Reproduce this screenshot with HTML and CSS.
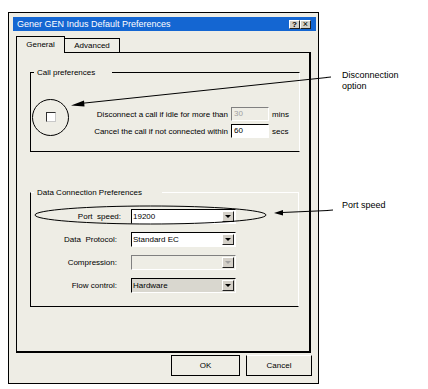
FILE: index.html
```html
<!DOCTYPE html>
<html lang="en">
<head>
  <meta charset="UTF-8">
  <title>Default Preferences</title>
  <link rel="stylesheet" href="styles.css">
</head>
<body>

  <div class="dialog">
    <div class="titlebar">
      <span class="title">Gener GEN Indus Default Preferences</span>
      <div class="title-buttons">
        <span class="tb-btn">?</span>
        <span class="tb-btn tb-close">&times;</span>
      </div>
    </div>

    <div class="tabs">
      <div class="tab active">General</div>
      <div class="tab">Advanced</div>
      <div class="tab-fill"></div>
    </div>

    <div class="panel">
      <div class="group call-group">
        <div class="group-title">Call preferences</div>
        <div class="call-body">
          <span class="checkbox"></span>
          <div class="call-rows">
            <span class="label">Disconnect a call if idle for more than</span>
            <span class="field disabled">30</span>
            <span class="unit">mins</span>
            <span class="label">Cancel the call if not connected within</span>
            <span class="field">60</span>
            <span class="unit">secs</span>
          </div>
        </div>
      </div>

      <div class="group data-group">
        <div class="group-title">Data Connection Preferences</div>
        <div class="data-rows">
          <span class="label port-label">Port&nbsp; speed:</span>
          <div class="combo"><span>19200</span><span class="combo-btn"></span></div>

          <span class="label">Data&nbsp; Protocol:</span>
          <div class="combo"><span>Standard EC</span><span class="combo-btn"></span></div>

          <span class="label">Compression:</span>
          <div class="combo disabled"><span></span><span class="combo-btn"></span></div>

          <span class="label">Flow control:</span>
          <div class="combo grey"><span>Hardware</span><span class="combo-btn"></span></div>
        </div>
      </div>
    </div>

    <div class="buttons">
      <button class="btn btn-ok">OK</button>
      <button class="btn btn-cancel">Cancel</button>
    </div>
  </div>

  <!-- annotation layer -->
  <svg class="notes" width="428" height="389" viewBox="0 0 428 389">
    <circle cx="50.5" cy="117.5" r="18" fill="none" stroke="#000"/>
    <line x1="82" y1="103.3" x2="327" y2="77.5" stroke="#000"/>
    <line x1="326" y1="77.5" x2="331" y2="77" stroke="#000"/>
    <polygon points="71,105.5 84,100.5 84.5,106.5" fill="#000"/>

    <ellipse cx="150.5" cy="215" rx="115.5" ry="9" fill="none" stroke="#000"/>
    <line x1="282" y1="212.5" x2="328" y2="210.5" stroke="#000"/>
    <line x1="327" y1="210.5" x2="333" y2="210" stroke="#000"/>
    <polygon points="274,213 283,210 283,215.5" fill="#000"/>
  </svg>

  <div class="callout callout-disc">Disconnection<br>option</div>
  <div class="callout callout-port">Port speed</div>

</body>
</html>
```

FILE: styles.css
```css
body {
  margin: 0;
  background: #fff;
  font-family: "Liberation Sans", Arial, sans-serif;
  font-size: 8px;
  color: #000;
}

.dialog {
  width: 309px;
  margin: 12px 0 0 8px;
  border: 1px solid #000;
  background: #eeede5;
}

.titlebar {
  display: flex;
  align-items: center;
  justify-content: space-between;
  height: 14px;
  margin: 4px 2px 0 4px;
  padding: 0 5px 0 4px;
  background: #1466d2;
  color: #fff;
  font-size: 9px;
}

.title-buttons {
  display: flex;
}

.tb-btn {
  width: 11px;
  height: 9px;
  box-sizing: border-box;
  background: #d4d0c8;
  border: 1px solid;
  border-color: #fff #202020 #202020 #fff;
  color: #000;
  font-size: 8px;
  font-weight: bold;
  line-height: 7px;
  text-align: center;
}

.tb-close {
  font-weight: normal;
  font-size: 9px;
}

.tabs {
  display: flex;
  align-items: flex-start;
  width: 295px;
  margin: 5px 0 0 7px;
}

.tab {
  box-sizing: border-box;
  text-align: center;
}

.tab.active {
  width: 49px;
  height: 17px;
  border: 1px solid #000;
  border-bottom: none;
  line-height: 15px;
}

.tab:not(.active) {
  width: 55px;
  height: 15px;
  margin-top: 2px;
  border-top: 1px solid #000;
  border-right: 1px solid #000;
  border-bottom: 1px solid #000;
  line-height: 14px;
}

.tab-fill {
  flex: 1;
  height: 17px;
  box-sizing: border-box;
  border-bottom: 1px solid #000;
}

.panel {
  width: 292px;
  height: 298px;
  margin-left: 7px;
  border-left: 1px solid #000;
  border-right: 2px solid #000;
  border-bottom: 2px solid #000;
  overflow: hidden;
}

.group {
  margin-left: 13px;
  box-sizing: border-box;
  border: 1px solid;
  border-color: #000 #fff #000 #000;
}

.group-title {
  width: fit-content;
  margin: -6px 0 0 3px;
  padding: 0 17px 0 3px;
  line-height: 11px;
  background: #eeede5;
}

.call-group {
  width: 270px;
  margin-top: 19px;
}

.call-body {
  display: flex;
  align-items: flex-start;
  padding: 29px 0 13px 15px;
}

.checkbox {
  width: 10px;
  height: 10px;
  margin-top: 5px;
  box-sizing: border-box;
  background: #fff;
  border: 1px solid;
  border-color: #303030 #c8c8c8 #c8c8c8 #303030;
}

.call-rows {
  display: grid;
  grid-template-columns: 172px 38px auto;
  column-gap: 3px;
  row-gap: 3px;
  align-items: center;
}

.label {
  text-align: right;
  white-space: nowrap;
}

.field {
  height: 14px;
  box-sizing: border-box;
  padding-left: 2px;
  line-height: 12px;
  background: #fff;
  border: 1px solid;
  border-color: #000 #fff #fff #000;
}

.field.disabled {
  background: #eeede5;
  border-color: #808080 #fff #fff #808080;
  color: #a0a0a0;
}

.data-group {
  width: 269px;
  margin-top: 40px;
  border-color: #fff #fff #000 #000;
}

.data-group .group-title {
  padding-right: 20px;
}

.data-rows {
  display: grid;
  grid-template-columns: 86px 105px;
  column-gap: 14px;
  row-gap: 8px;
  align-items: center;
  padding: 11px 0 13px 0;
}

.port-label {
  margin-right: -4px;
}

.combo {
  display: flex;
  align-items: center;
  justify-content: space-between;
  height: 15px;
  box-sizing: border-box;
  padding: 0 1px 0 1px;
  background: #fff;
  border: 1px solid;
  border-color: #000 #fff #fff #000;
}

.combo-btn {
  display: flex;
  align-items: center;
  justify-content: center;
  width: 12px;
  height: 11px;
  box-sizing: border-box;
  background: #d4d0c8;
  border: 1px solid;
  border-color: #fff #202020 #202020 #fff;
}

.combo-btn::after {
  content: "";
  border-left: 3px solid transparent;
  border-right: 3px solid transparent;
  border-top: 3px solid #000;
}

.combo.disabled {
  background: #eeede5;
  border-color: #808080 #fff #fff #808080;
}

.combo.disabled .combo-btn::after {
  border-top-color: #a0a0a0;
}

.combo.grey {
  background: #d9d7cf;
}

.buttons {
  display: flex;
  justify-content: flex-end;
  gap: 6px;
  margin: 2px 6px 0 0;
  padding-bottom: 7px;
}

.btn {
  height: 21px;
  padding: 0;
  font: inherit;
  color: #000;
  background: transparent;
  border: 1px solid #000;
}

.btn-ok {
  width: 69px;
}

.btn-cancel {
  width: 66px;
  border-top-color: #fff;
}

.notes {
  position: absolute;
  top: 0;
  left: 0;
  pointer-events: none;
}

.callout {
  position: absolute;
  left: 342px;
  font-size: 9px;
  line-height: 11px;
}

.callout-disc {
  top: 70px;
}

.callout-port {
  top: 200px;
}
```
